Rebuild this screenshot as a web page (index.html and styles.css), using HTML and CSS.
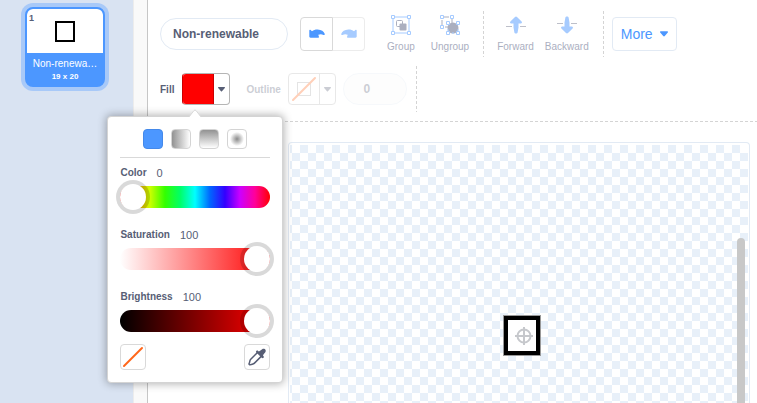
FILE: index.html
```html
<!DOCTYPE html>
<html lang="en">
<head>
<meta charset="utf-8">
<title>Costume editor</title>
<link rel="stylesheet" href="styles.css">
</head>
<body>
<div class="editor">
  <aside class="costumes">
    <div class="costume">
      <div class="costume-preview">
        <span class="costume-number">1</span>
        <svg width="20" height="21" viewBox="0 0 20 21"><rect x="1" y="1" width="18" height="19" fill="#fff" stroke="#000" stroke-width="2"/></svg>
      </div>
      <div class="costume-name">Non-renewa…</div>
      <div class="costume-size">19 x 20</div>
    </div>
  </aside>
  <div class="gutter"></div>
  <main class="paint">
    <div class="toolbar">
      <div class="row">
        <input class="name" type="text" value="Non-renewable" aria-label="Costume">
        <div class="history">
          <button class="undo" aria-label="Undo"><svg width="16" height="10" viewBox="0 0 16 10"><path fill="#4c97ff" d="M.3 1.600c0-.9.700-1.100 1.300-.6L3 2.200C4.600 1 6.600.5 8.700.6c3.600.2 6.300 2 7.100 4.300.3 1-.6 1.500-1.400 1-1.600-.9-3.200-1-5.100-.2L9.800 7.400c.6.700.2 1.400-.6 1.400H1.500C.8 8.800.3 8.300.3 7.600z"/></svg></button>
          <button class="redo" aria-label="Redo"><svg width="16" height="10" viewBox="0 0 16 10"><path fill="#a6cbff" transform="matrix(-1 0 0 1 16 0)" d="M.3 1.600c0-.9.700-1.100 1.300-.6L3 2.200C4.600 1 6.600.5 8.700.6c3.600.2 6.300 2 7.100 4.300.3 1-.6 1.500-1.400 1-1.600-.9-3.200-1-5.100-.2L9.800 7.400c.6.700.2 1.400-.6 1.400H1.500C.8 8.800.3 8.300.3 7.600z"/></svg></button>
        </div>
        <div class="tools tools-group">
          <button class="tool"><svg width="20" height="20" viewBox="0 0 20 20" fill="none"><path d="M2 2h16v16H2z" stroke="#a6cbff"/><rect x="5.500" y="5.500" width="6" height="6" rx="1" stroke="#abafbf"/><rect x="8.500" y="8.500" width="7" height="7" rx="1" fill="#abafbf"/><g fill="#fff" stroke="#a6cbff"><path d="M.5.500h3v3h-3zM16.500.500h3v3h-3zM.5 16.500h3v3h-3zM16.500 16.500h3v3h-3z"/></g></svg><span>Group</span></button>
          <button class="tool"><svg width="20" height="20" viewBox="0 0 20 20" fill="none"><path d="M2 2h10v10H2z" stroke="#abafbf" stroke-dasharray="7 3"/><circle cx="13" cy="13" r="5.500" fill="#abafbf"/><path d="M8 8h10v10H8z" stroke="#a6cbff" stroke-dasharray="2 6"/><g fill="#fff" stroke="#a6cbff"><path d="M.5.500h3v3h-3zM10.500.500h3v3h-3zM.5 10.500h3v3h-3zM6.500 6.500h3v3h-3zM16.500 6.500h3v3h-3zM6.500 16.500h3v3h-3zM16.500 16.500h3v3h-3z"/></g></svg><span>Ungroup</span></button>
        </div>
        <div class="tools tools-order">
          <button class="tool"><svg width="20" height="20" viewBox="0 0 20 20"><path d="M0 11.500h6M14 11.500h6" stroke="#bdbfc9"/><path fill="#a6cbff" d="M10 1.500c.4 0 .7.200 1 .5l4.600 4.600c.8.800.3 1.900-.8 1.900H12.500v4l-.9 5c-.3 1.300-2.900 1.300-3.200 0l-.9-5v-4H5.200c-1.100 0-1.600-1.100-.8-1.900L9 2c.3-.3.600-.5 1-.5z"/></svg><span>Forward</span></button>
          <button class="tool"><svg width="20" height="20" viewBox="0 0 20 20"><path d="M0 8.500h6M14 8.500h6" stroke="#bdbfc9"/><path fill="#a6cbff" transform="matrix(1 0 0 -1 0 20)" d="M10 1.500c.4 0 .7.200 1 .5l4.600 4.600c.8.800.3 1.900-.8 1.900H12.500v4l-.9 5c-.3 1.300-2.900 1.300-3.200 0l-.9-5v-4H5.200c-1.100 0-1.600-1.100-.8-1.900L9 2c.3-.3.600-.5 1-.5z"/></svg><span>Backward</span></button>
        </div>
        <button class="more">More <svg width="8" height="6" viewBox="0 0 8 6"><path fill="#4c97ff" d="M.7.200h6.600c.7 0 .9.800.5 1.300L4.800 5c-.4.500-1.200.5-1.600 0L.2 1.500C-.2 1 0 .2.700.200z"/></svg></button>
      </div>
      <div class="row row-style">
        <div class="field">
          <span class="label">Fill</span>
          <div class="picker">
            <button class="color fill" aria-label="Fill color"><span class="swatch swatch-red"></span><span class="drop"><svg width="7" height="5" viewBox="0 0 7 5"><path fill="#575e75" d="M.5 0h6c.5 0 .6.500.3.900L4 4.200c-.3.300-.7.300-1 0L.2.900C-.1.500 0 0 .5 0z"/></svg></span></button>
            <div class="popover">
              <svg class="arrow" width="14" height="8" viewBox="0 0 14 8"><path d="M1 8L6 1.500q1-1 2 0L13 8" fill="#fff" stroke="#d9d9d9"/></svg>
              <div class="modes">
                <button class="mode solid" aria-label="Solid"></button>
                <button class="mode horizontal" aria-label="Horizontal gradient"></button>
                <button class="mode vertical" aria-label="Vertical gradient"></button>
                <button class="mode radial" aria-label="Radial gradient"></button>
              </div>
              <div class="slider"><div class="slider-head"><label for="hue">Color</label><output for="hue">0</output></div><input id="hue" class="hue" type="range" min="0" max="100" value="0"></div>
              <div class="slider"><div class="slider-head"><label for="sat">Saturation</label><output for="sat">100</output></div><input id="sat" class="sat" type="range" min="0" max="100" value="100"></div>
              <div class="slider"><div class="slider-head"><label for="bri">Brightness</label><output for="bri">100</output></div><input id="bri" class="bri" type="range" min="0" max="100" value="100"></div>
              <div class="actions">
                <button class="action" aria-label="No color"><svg width="24" height="24" viewBox="0 0 24 24"><path d="M3 21L21 3" stroke="#ff661a" stroke-width="2" stroke-linecap="round"/></svg></button>
                <button class="action" aria-label="Pick color"><svg width="24" height="24" viewBox="0 0 24 24"><path d="M12.500 7.500L5.500 14.500C4.600 15.500 5 17 4.200 18.300c-.6 1 .4 1.900 1.400 1.400 1.300-.7 2.600-.3 3.600-1.300l7-7" fill="#fff" stroke="#575e75" stroke-width="1.500" stroke-linejoin="round"/><path fill="#575e75" d="M11.300 5.900c.6-.6 1.400-.5 1.900 0l.7.500 1.900-1.200c1-.8 2-1.600 3.200-1.400 1.300.2 2 1.300 1.700 2.500-.2 1.200-1.100 1.700-1.800 2.700l-1 1.200.5.700c.6.600.6 1.400.1 1.900-.5.500-1.300.5-1.800-.1l-5.400-5.100c-.5-.5-.5-1.200 0-1.700z"/></svg></button>
              </div>
            </div>
          </div>
        </div>
        <div class="field disabled">
          <span class="label">Outline</span>
          <button class="color outline" disabled aria-label="Outline color"><span class="swatch"><svg width="30" height="30" viewBox="0 0 30 30" fill="none"><rect x="8.500" y="8.500" width="13" height="13" stroke="#a8a8a8"/><path d="M4 26L26 4" stroke="#ff661a" stroke-width="2" stroke-linecap="round"/></svg></span><span class="drop"><svg width="7" height="5" viewBox="0 0 7 5"><path fill="#575e75" d="M.5 0h6c.5 0 .6.500.3.900L4 4.200c-.3.300-.7.300-1 0L.2.900C-.1.500 0 0 .5 0z"/></svg></span></button>
          <input class="stroke-width" type="text" value="0" disabled aria-label="Outline width">
        </div>
      </div>
    </div>
    <div class="canvas">
      <div class="checker">
        <svg class="art" width="38" height="41" viewBox="0 0 38 41"><rect x=".5" y=".5" width="37" height="40" fill="#fff" stroke="#999"/><rect x="3" y="3" width="32" height="35" fill="none" stroke="#000" stroke-width="4"/><g fill="none" stroke="#c6c8cc" stroke-width="2"><circle cx="21" cy="21" r="6.500"/><path d="M21 12v18M12 21h18"/></g></svg>
        <div class="scrollbar"></div>
      </div>
    </div>
  </main>
</div>
</body>
</html>
```
FILE: styles.css
```css
* { box-sizing: border-box; }

body {
  margin: 0;
  overflow: hidden;
  font-family: "Liberation Sans", Arial, sans-serif;
  font-size: 10px;
  color: #575e75;
}

button, input {
  margin: 0;
  padding: 0;
  border: 0;
  background: none;
  font: inherit;
  color: inherit;
}

svg { display: block; flex: none; }

.editor { display: flex; height: 100vh; }

.costumes { flex: none; width: 133px; padding: 7px 28px 0 25px; background: #d9e3f2; }

.costume {
  height: 80px;
  overflow: hidden;
  border: 2px solid #4c97ff;
  border-radius: 8px;
  background: #4c97ff;
  box-shadow: 0 0 0 4px #a8c9f8;
  color: #fff;
  text-align: center;
}

.costume-preview {
  position: relative;
  display: flex;
  align-items: center;
  justify-content: center;
  height: 44px;
  border-radius: 5px 5px 0 0;
  background: #fff;
}

.costume-number {
  position: absolute;
  top: 3px;
  left: 2px;
  font-size: 9px;
  font-weight: bold;
  line-height: 12px;
  color: #575e75;
}

.costume-name {
  margin-top: 4px;
  line-height: 14px;
  white-space: nowrap;
}

.costume-size { font-size: 8px; font-weight: bold; line-height: 12px; }

.gutter {
  flex: none;
  width: 15px;
  border-left: 1px solid #ececec;
  border-right: 1px solid #c6c6c6;
  background: #f9f9f9;
}

.paint { display: flex; flex: 1; flex-direction: column; min-width: 0; padding-left: 12px; background: #fff; }

.toolbar {
  display: flex;
  flex: none;
  flex-direction: column;
  gap: 9px;
  padding: 11px 0 10px;
  background: repeating-linear-gradient(90deg, #d4d4d4 0 3px, transparent 3px 5px) bottom / 100% 1px no-repeat;
}

.row { display: flex; align-items: center; height: 46px; }

.name {
  width: 128px;
  height: 32px;
  padding: 0 12px;
  border: 1px solid #e2eaf4;
  border-radius: 16px;
  font-size: 12px;
  font-weight: bold;
}

.history { display: flex; margin-left: 12px; }

.undo, .redo {
  display: flex;
  align-items: center;
  justify-content: center;
  width: 33px;
  height: 34px;
  border: 1px solid #d9d9d9;
}

.undo { border-radius: 4px 0 0 4px; }
.redo { width: 32px; border-color: #ececec; border-left: 0; border-radius: 0 4px 4px 0; }

.tools {
  display: flex;
  align-items: center;
  height: 46px;
  background: repeating-linear-gradient(#d4d4d4 0 3px, transparent 3px 5px) right / 1px 100% no-repeat;
}

.tools-group { gap: 16px; padding: 0 15px 0 22px; }
.tools-order { gap: 11px; padding: 0 15px 0 13px; }

.tool {
  display: flex;
  flex-direction: column;
  align-items: center;
  gap: 6px;
  line-height: 12px;
  color: #abafbf;
}

.more {
  display: flex;
  align-items: center;
  justify-content: space-between;
  width: 65px;
  height: 34px;
  margin-left: 8px;
  padding: 0 8px;
  border: 1px solid #e2eaf4;
  border-radius: 4px;
  font-size: 14px;
  color: #4c97ff;
}

.row-style { gap: 16px; }
.field { display: flex; align-items: center; gap: 8px; }
.label { font-weight: bold; }
.picker { position: relative; }

.color {
  display: flex;
  width: 48px;
  height: 32px;
  overflow: hidden;
  border: 1px solid #b5b5b5;
  border-radius: 4px;
}

.swatch { width: 31px; height: 30px; border-right: 1px solid #b5b5b5; }
.swatch-red { border-color: #c00; background: #f00; }
.drop { display: flex; flex: 1; align-items: center; justify-content: center; height: 30px; }
.fill { border-left-color: #c00; }

.field.disabled {
  gap: 7px;
  height: 46px;
  padding-right: 10px;
  background: repeating-linear-gradient(#d4d4d4 0 3px, transparent 3px 5px) right / 1px 100% no-repeat;
}

.disabled > * { opacity: .3; }

.stroke-width {
  width: 64px;
  height: 32px;
  padding-right: 16px;
  border: 1px solid #e2eaf4;
  border-radius: 16px;
  background: #fbfbfb;
  font-size: 12px;
  font-weight: bold;
  text-align: center;
}

.popover {
  position: absolute;
  z-index: 2;
  top: 43px;
  left: -75px;
  width: 176px;
  padding: 12px;
  border: 1px solid #d4d4d4;
  border-radius: 4px;
  background: #fff;
  box-shadow: 0 0 8px 1px rgba(0, 0, 0, .3);
}

.arrow { position: absolute; top: -8px; left: 80px; }

.modes {
  display: flex;
  justify-content: center;
  gap: 8px;
  padding-bottom: 8px;
  border-bottom: 1px solid #d9d9d9;
}

.mode { width: 20px; height: 20px; border: 1px solid #d4d4d4; border-radius: 4px; }
.solid { border-color: #4489ea; background: #4c97ff; }
.horizontal { background: linear-gradient(90deg, #929292, #fff); }
.vertical { background: linear-gradient(#929292, #fff); }
.radial { background: radial-gradient(circle, #8a8a8a, #fff 55%); }

.slider { display: flex; flex-direction: column; gap: 6px; margin-top: 8px; padding-bottom: 10px; }
.slider + .slider { margin-top: 10px; }
.slider-head { display: flex; gap: 10px; line-height: 14px; }
.slider-head label { font-weight: bold; }
.slider-head output { font-size: 11px; }

.slider input {
  display: block;
  width: 100%;
  height: 22px;
  border-radius: 11px;
  appearance: none;
}

.slider input::-webkit-slider-thumb {
  width: 26px;
  height: 26px;
  border-radius: 50%;
  background: #fff;
  box-shadow: 0 0 0 4px rgba(0, 0, 0, .15);
  appearance: none;
}

.hue {
  background: linear-gradient(90deg, #f00, #f90, #cf0, #3f0, #0f6, #0ff, #06f, #30f, #c0f, #f09, #f00);
}
.sat { background: linear-gradient(90deg, #fff, #f00); }
.bri { background: linear-gradient(90deg, #000, #f00); }

.actions { display: flex; justify-content: space-between; margin-top: 2px; }
.action { width: 26px; height: 26px; border: 1px solid #d9d9d9; border-radius: 4px; }

.canvas {
  flex: 1;
  margin: 20px 7px 0 128px;
  padding: 2px 1px 0;
  border: 1px solid #e2eaf4;
  border-bottom: 0;
  border-radius: 4px 4px 0 0;
}

.checker {
  position: relative;
  height: 100%;
  background: repeating-conic-gradient(#e8f0f9 0 25%, #fff 0 50%) 2px 0 / 16px 16px;
}

.art { position: absolute; top: 170px; left: 213px; }

.scrollbar {
  position: absolute;
  top: 93px;
  right: 3px;
  bottom: 0;
  width: 8px;
  border-radius: 4px 4px 0 0;
  background: #c8c8c8;
}
```
